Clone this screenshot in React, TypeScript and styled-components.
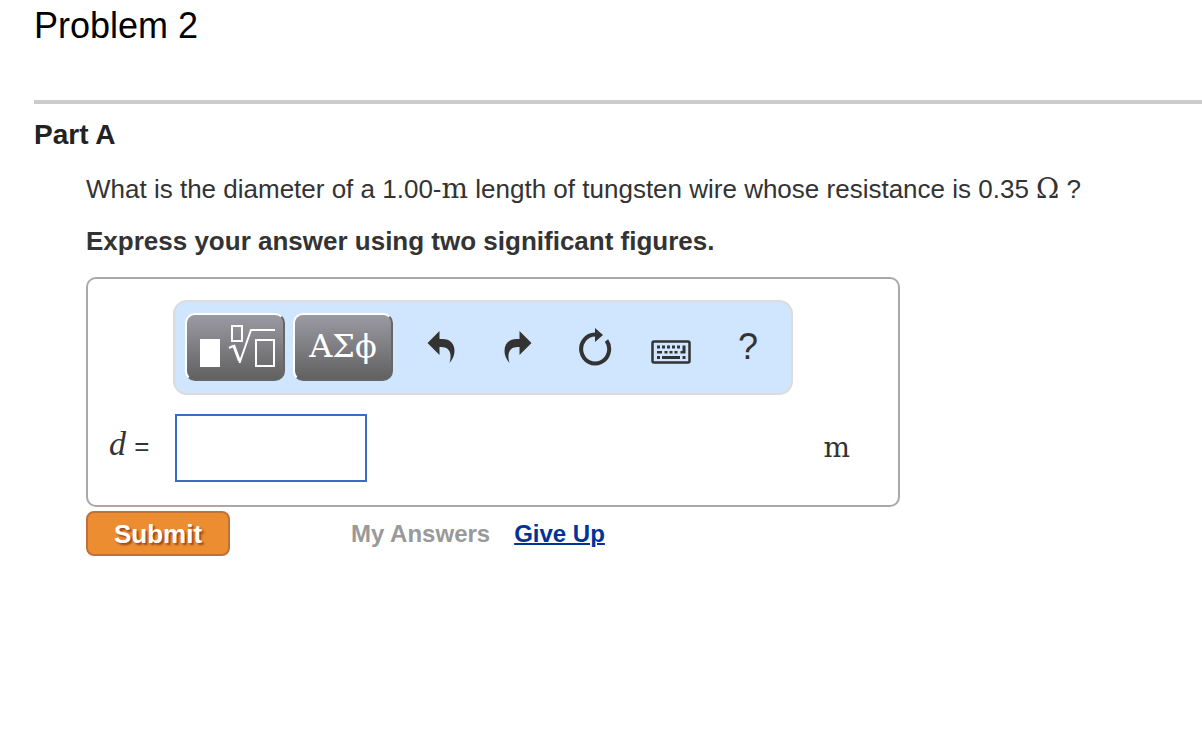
import React, { useState } from "react";
import styled, { createGlobalStyle } from "styled-components";

const GlobalStyle = createGlobalStyle`
  *, *::before, *::after { box-sizing: border-box; }
  body {
    margin: 0;
    background: #fff;
    color: #333;
    font-family: "Liberation Sans", Arial, Helvetica, sans-serif;
    font-size: 26px;
    line-height: 32px;
  }
  button, input { font: inherit; }
`;

const Page = styled.main`
  padding: 5px 0 40px 34px;
`;

const Title = styled.h1`
  margin: 0;
  color: #000;
  font-size: 36px;
  line-height: 42px;
  font-weight: 400;
`;

const Part = styled.section`
  margin-top: 53px;
  padding-top: 15px;
  border-top: 4px solid #ccc;
`;

const PartTitle = styled.h2`
  margin: 0;
  color: #222;
  font-size: 28px;
  line-height: 32px;
  font-weight: 700;
`;

const Body = styled.div`
  margin-top: 22px;
  padding-left: 52px;
`;

const Question = styled.p`
  margin: 0;
`;

const Instruction = styled.p`
  margin: 20px 0;
  font-weight: 700;
`;

const MathUnit = styled.span`
  font-family: "DejaVu Serif", serif;
  font-size: 28px;
  line-height: 0;
`;

const MathVariable = styled.span`
  margin-right: 1px;
  font-family: "Liberation Serif", "Times New Roman", serif;
  font-size: 34px;
  font-style: italic;
  line-height: 0;
`;

const AnswerPanel = styled.div`
  width: 100%;
  max-width: 814px;
  padding: 21px 48px 23px 21px;
  border: 2px solid #a9a9a9;
  border-radius: 10px;
`;

const ToolbarSlot = styled.div`
  padding-left: 64px;
`;

const Toolbar = styled.div`
  display: flex;
  align-items: center;
  width: 100%;
  max-width: 620px;
  height: 95px;
  padding: 0 10px 2px;
  border: 2px solid #dcdcdc;
  border-radius: 14px;
  background: #d0e6ff;
`;

const PaletteButton = styled.button`
  display: flex;
  align-items: center;
  justify-content: center;
  flex: none;
  width: 100px;
  height: 68px;
  margin-right: 8px;
  padding: 0;
  border: 2px solid;
  border-color: #fff #666 #666 #fff;
  border-radius: 10px;
  background: linear-gradient(#9b9aa3, #616161);
  color: #fff;
  font-family: "DejaVu Serif", serif;
  font-size: 32px;
  line-height: 40px;
  cursor: pointer;
`;

const PaletteLabel = styled.span`
  padding-bottom: 2px;
`;

const Tools = styled.div`
  display: flex;
  flex: 1;
  justify-content: space-between;
  padding: 0 3px 0 10px;
`;

const ToolButton = styled.button`
  display: flex;
  align-items: center;
  justify-content: center;
  width: 60px;
  height: 60px;
  padding: 0;
  border: 0;
  background: none;
  color: #333;
  font-size: 36px;
  line-height: 40px;
  cursor: pointer;
`;

const AnswerRow = styled.div`
  display: flex;
  align-items: center;
  margin-top: 19px;
`;

const AnswerLabel = styled.label`
  flex: none;
  width: 66px;
  padding-bottom: 4px;
`;

const AnswerInput = styled.input`
  width: 192px;
  height: 68px;
  padding: 0 12px;
  border: 2px solid #3a6bc6;
  border-radius: 0;
  background: #fff;
  outline: none;
`;

const Unit = styled(MathUnit)`
  margin-left: auto;
`;

const Actions = styled.div`
  display: flex;
  align-items: center;
  margin-top: 4px;
  font-size: 24px;
  font-weight: 700;
`;

const SubmitButton = styled.button`
  width: 144px;
  height: 45px;
  margin-right: 121px;
  padding: 0;
  border: 2px solid #c17038;
  border-radius: 8px;
  background: #eb8d30;
  color: #fff;
  font-size: 26px;
  font-weight: 700;
  text-shadow: 2px 2px 2px #a0451a;
  cursor: pointer;
`;

const MyAnswers = styled.span`
  margin-right: 24px;
  color: #999;
`;

const GiveUp = styled.a`
  color: #039;
  text-decoration: underline;
  text-decoration-thickness: 2px;
`;

const TemplateIcon = () => (
  <svg width="80" height="48" viewBox="-4 0 80 48" fill="none" stroke="#fff" strokeWidth="2" aria-hidden="true">
    <rect x="1" y="16" width="20" height="28" fill="#fff" stroke="none" />
    <rect x="33" y="3" width="10" height="15" />
    <path d="M30 25l4-2" />
    <path d="M34.500 22l6 16" strokeWidth="3" />
    <path d="M40.500 40L52 7h24" />
    <rect x="57" y="17" width="18" height="26" />
  </svg>
);

const ArrowIcon = ({ mirrored }: { mirrored?: boolean }) => (
  <svg width="28" height="32" viewBox="0 0 28 32" fill="#333" aria-hidden="true">
    <path
      transform={mirrored ? "matrix(-1 0 0 1 28 0)" : undefined}
      d="M0.500 12L12.500 0v8h3C23 8 27.500 12.500 27.500 20c0 4-1.500 8-5 12 1.500-4.500 1.500-9.500-.5-12.500-1.500-2.500-4-3.500-9.500-3.500V24z"
    />
  </svg>
);

const ResetIcon = () => (
  <svg width="34" height="40" viewBox="0 0 34 40" aria-hidden="true">
    <path d="M17 7.500a14 14.500 0 1 0 11.500 6" fill="none" stroke="#333" strokeWidth="4" />
    <path d="M17 1l8 7-8 7z" fill="#333" />
  </svg>
);

const KeyboardIcon = () => (
  <svg width="40" height="24" viewBox="0 0 40 24" fill="#333" aria-hidden="true">
    <rect x="1.500" y="1.500" width="37" height="21" rx="1.500" fill="none" stroke="#333" strokeWidth="2.500" />
    <path d="M6 5.500h3v3h-3zM11 5.500h3v3h-3zM16 5.500h3v3h-3zM21 5.500h3v3h-3zM26 5.500h3v3h-3zM31.500 5.500h3v8h-5v-2.500h2z" />
    <path d="M6 11h5v2.500h-5zM13.500 11h3v2.500h-3zM18.500 11h3v2.500h-3zM23.500 11h3v2.500h-3z" />
    <path d="M6 16h3v3h-3zM11 16h18v3h-18zM31.500 16h3v3h-3z" />
  </svg>
);

const IconDrop = styled.span`
  display: flex;
  padding-top: 10px;
`;

export default function App() {
  const [answer, setAnswer] = useState("");

  return (
    <>
      <GlobalStyle />
      <Page>
        <Title>Problem 2</Title>
        <Part>
          <PartTitle>Part A</PartTitle>
          <Body>
            <Question>
              What is the diameter of a 1.00-<MathUnit>m</MathUnit> length of tungsten wire whose
              resistance is 0.35 <MathUnit>Ω</MathUnit> ?
            </Question>
            <Instruction>Express your answer using two significant figures.</Instruction>
            <AnswerPanel>
              <ToolbarSlot>
                <Toolbar role="toolbar" aria-label="Equation tools">
                  <PaletteButton type="button" aria-label="Templates">
                    <TemplateIcon />
                  </PaletteButton>
                  <PaletteButton type="button">
                    <PaletteLabel>ΑΣϕ</PaletteLabel>
                  </PaletteButton>
                  <Tools>
                    <ToolButton type="button" aria-label="Undo">
                      <ArrowIcon />
                    </ToolButton>
                    <ToolButton type="button" aria-label="Redo">
                      <ArrowIcon mirrored />
                    </ToolButton>
                    <ToolButton type="button" aria-label="Reset" onClick={() => setAnswer("")}>
                      <ResetIcon />
                    </ToolButton>
                    <ToolButton type="button" aria-label="Keyboard shortcuts">
                      <IconDrop>
                        <KeyboardIcon />
                      </IconDrop>
                    </ToolButton>
                    <ToolButton type="button">?</ToolButton>
                  </Tools>
                </Toolbar>
              </ToolbarSlot>
              <AnswerRow>
                <AnswerLabel htmlFor="answer">
                  <MathVariable>d</MathVariable> =
                </AnswerLabel>
                <AnswerInput id="answer" value={answer} onChange={(e) => setAnswer(e.target.value)} />
                <Unit>m</Unit>
              </AnswerRow>
            </AnswerPanel>
            <Actions>
              <SubmitButton type="submit">Submit</SubmitButton>
              <MyAnswers>My Answers</MyAnswers>
              <GiveUp href="#give-up">Give Up</GiveUp>
            </Actions>
          </Body>
        </Part>
      </Page>
    </>
  );
}
